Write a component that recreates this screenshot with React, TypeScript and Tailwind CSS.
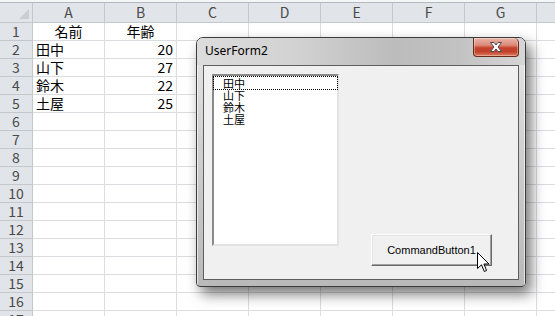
import React from "react";

const cols = ["A", "B", "C", "D", "E", "F", "G", ""];

const cells: Record<number, { a: string; b: string; head?: boolean }> = {
  1: { a: "名前", b: "年齢", head: true },
  2: { a: "田中", b: "20" },
  3: { a: "山下", b: "27" },
  4: { a: "鈴木", b: "22" },
  5: { a: "土屋", b: "25" },
};

const rows = Array.from({ length: 17 }, (_, i) => i + 1);
const items = ["田中", "山下", "鈴木", "土屋"];

const sheetFont = { fontFamily: '"Noto Sans CJK JP", "Liberation Sans", sans-serif' };

const Sheet = () => {
  return (
    <div className="flex flex-col" style={sheetFont}>
      <div className="h-[3px] bg-[#f5f6f7] border-b border-[#b4b9bf]" />
      {/* column header */}
      <div className="flex h-[20px] bg-[#e1e5ea] border-b border-[#c3c8cf]">
        <div className="relative w-[33px] shrink-0 border-r border-[#c3c8cf]">
          <svg className="absolute right-[3px] bottom-[3px]" width="10" height="10" viewBox="0 0 10 10">
            <path d="M10 0 L10 10 L0 10 Z" fill="#c9ced5" />
          </svg>
        </div>
        {cols.map((c, i) => (
          <div
            key={i}
            className="w-[72px] shrink-0 border-r border-[#c3c8cf] text-center text-[14px] leading-[19px] text-[#4a4a4a]"
          >
            {c}
          </div>
        ))}
      </div>
      {rows.map((r) => {
        const d = cells[r];
        return (
          <div key={r} className="flex h-[18px]">
            <div className="w-[33px] shrink-0 bg-[#e1e5ea] border-r border-b border-[#c3c8cf] text-center text-[14px] leading-[17px] text-[#4a4a4a]">
              {r}
            </div>
            {cols.map((c, i) => {
              let text = "";
              let align = "text-left pl-[3px]";
              if (d && c === "A") {
                text = d.a;
                if (d.head) align = "text-center";
              }
              if (d && c === "B") {
                text = d.b;
                align = d.head ? "text-center" : "text-right pr-[3px]";
              }
              return (
                <div
                  key={i}
                  className={`w-[72px] shrink-0 border-r border-b border-[#dadcdf] text-[14px] leading-[17px] text-black whitespace-nowrap ${align}`}
                >
                  {text}
                </div>
              );
            })}
          </div>
        );
      })}
    </div>
  );
};

const CloseButton = () => (
  <div className="w-[46px] h-[19px] rounded-b-[4px] rounded-tr-[5px] border border-t-0 border-[#6b2a1e] bg-[linear-gradient(180deg,#eab3a6_0%,#dc8a78_40%,#c5432c_55%,#c0412a_75%,#e07a60_100%)] shadow-[inset_0_0_0_1px_rgba(255,255,255,0.35)] flex items-center justify-center">
    <svg width="16" height="12" viewBox="0 0 16 12">
      <path
        d="M2.5 1.5 L6 1.5 L8 4 L10 1.5 L13.5 1.5 L10 6 L13.5 10.5 L10 10.5 L8 8 L6 10.5 L2.5 10.5 L6 6 Z"
        fill="#ffffff"
        stroke="#4a4a52"
        strokeWidth="1"
        strokeLinejoin="round"
      />
    </svg>
  </div>
);

const UserForm = () => (
  <div className="absolute left-[196px] top-[37px] w-[330px] h-[250px] rounded-t-[7px] rounded-b-[4px] border border-[#3c3c3c] shadow-[5px_7px_14px_rgba(0,0,0,0.55)] overflow-hidden flex flex-col bg-[linear-gradient(180deg,#e6e6e6_0%,#cfcfcf_45%,#b9b9b9_100%)]">
    {/* title bar */}
    <div className="h-[27px] shrink-0 flex items-start justify-between bg-[linear-gradient(90deg,#dcdcdc_0%,#d2d2d2_30%,#bcbcbc_60%,#c2c2c2_80%,#d6d6d6_100%)]">
      <span
        className="pl-[8px] pt-[5px] text-[12px] leading-[16px] text-black"
        style={{ fontFamily: '"Noto Sans", "Liberation Sans", sans-serif' }}
      >
        UserForm2
      </span>
      <div className="mr-[6px]">
        <CloseButton />
      </div>
    </div>
    {/* frame + client */}
    <div className="flex-1 flex px-[6px] pb-[6px] shadow-[inset_1px_0_0_rgba(255,255,255,0.6),inset_-1px_0_0_rgba(255,255,255,0.6)]">
      <div className="flex-1 flex items-start border border-[#5e5e5e] bg-[#f0f0f0]">
        {/* list box */}
        <div
          className="ml-[8px] mt-[8px] w-[127px] h-[172px] shrink-0 bg-white border-2 border-t-[#8a8a8a] border-l-[#8a8a8a] border-r-[#e2e2e2] border-b-[#e2e2e2] flex flex-col pt-[1px]"
          style={{ fontFamily: '"Noto Sans CJK JP", sans-serif' }}
        >
          {items.map((it, i) => (
            <div
              key={it}
              className={`h-[12px] pl-[9px] text-[11px] leading-[12px] text-[#000000] ${
                i === 0 ? "outline-1 outline-dotted outline-black" : ""
              }`}
            >
              {it}
            </div>
          ))}
        </div>
        {/* command button */}
        <div
          className="ml-[32px] mt-[168px] w-[121px] h-[32px] shrink-0 bg-[#f0f0f0] border border-t-[#ffffff] border-l-[#ffffff] border-r-[#6a6a6a] border-b-[#6a6a6a] shadow-[inset_-1px_-1px_0_#a0a0a0,inset_1px_1px_0_#e3e3e3] flex items-center justify-center text-[11px] text-black"
          style={{ fontFamily: '"Liberation Sans", sans-serif' }}
        >
          CommandButton1
        </div>
      </div>
    </div>
  </div>
);

const Cursor = () => (
  <svg className="absolute left-[477px] top-[252px]" width="13" height="21" viewBox="0 0 13 21">
    <path
      d="M0.5 0.5 L0.5 16.5 L4.5 12.8 L7.3 19.5 L9.6 18.5 L6.9 12 L12 12 Z"
      fill="#ffffff"
      stroke="#000000"
      strokeWidth="1"
      strokeLinejoin="miter"
    />
  </svg>
);

export default function App() {
  return (
    <div className="relative w-[555px] h-[316px] overflow-hidden bg-white">
      <Sheet />
      <UserForm />
      <Cursor />
    </div>
  );
}
